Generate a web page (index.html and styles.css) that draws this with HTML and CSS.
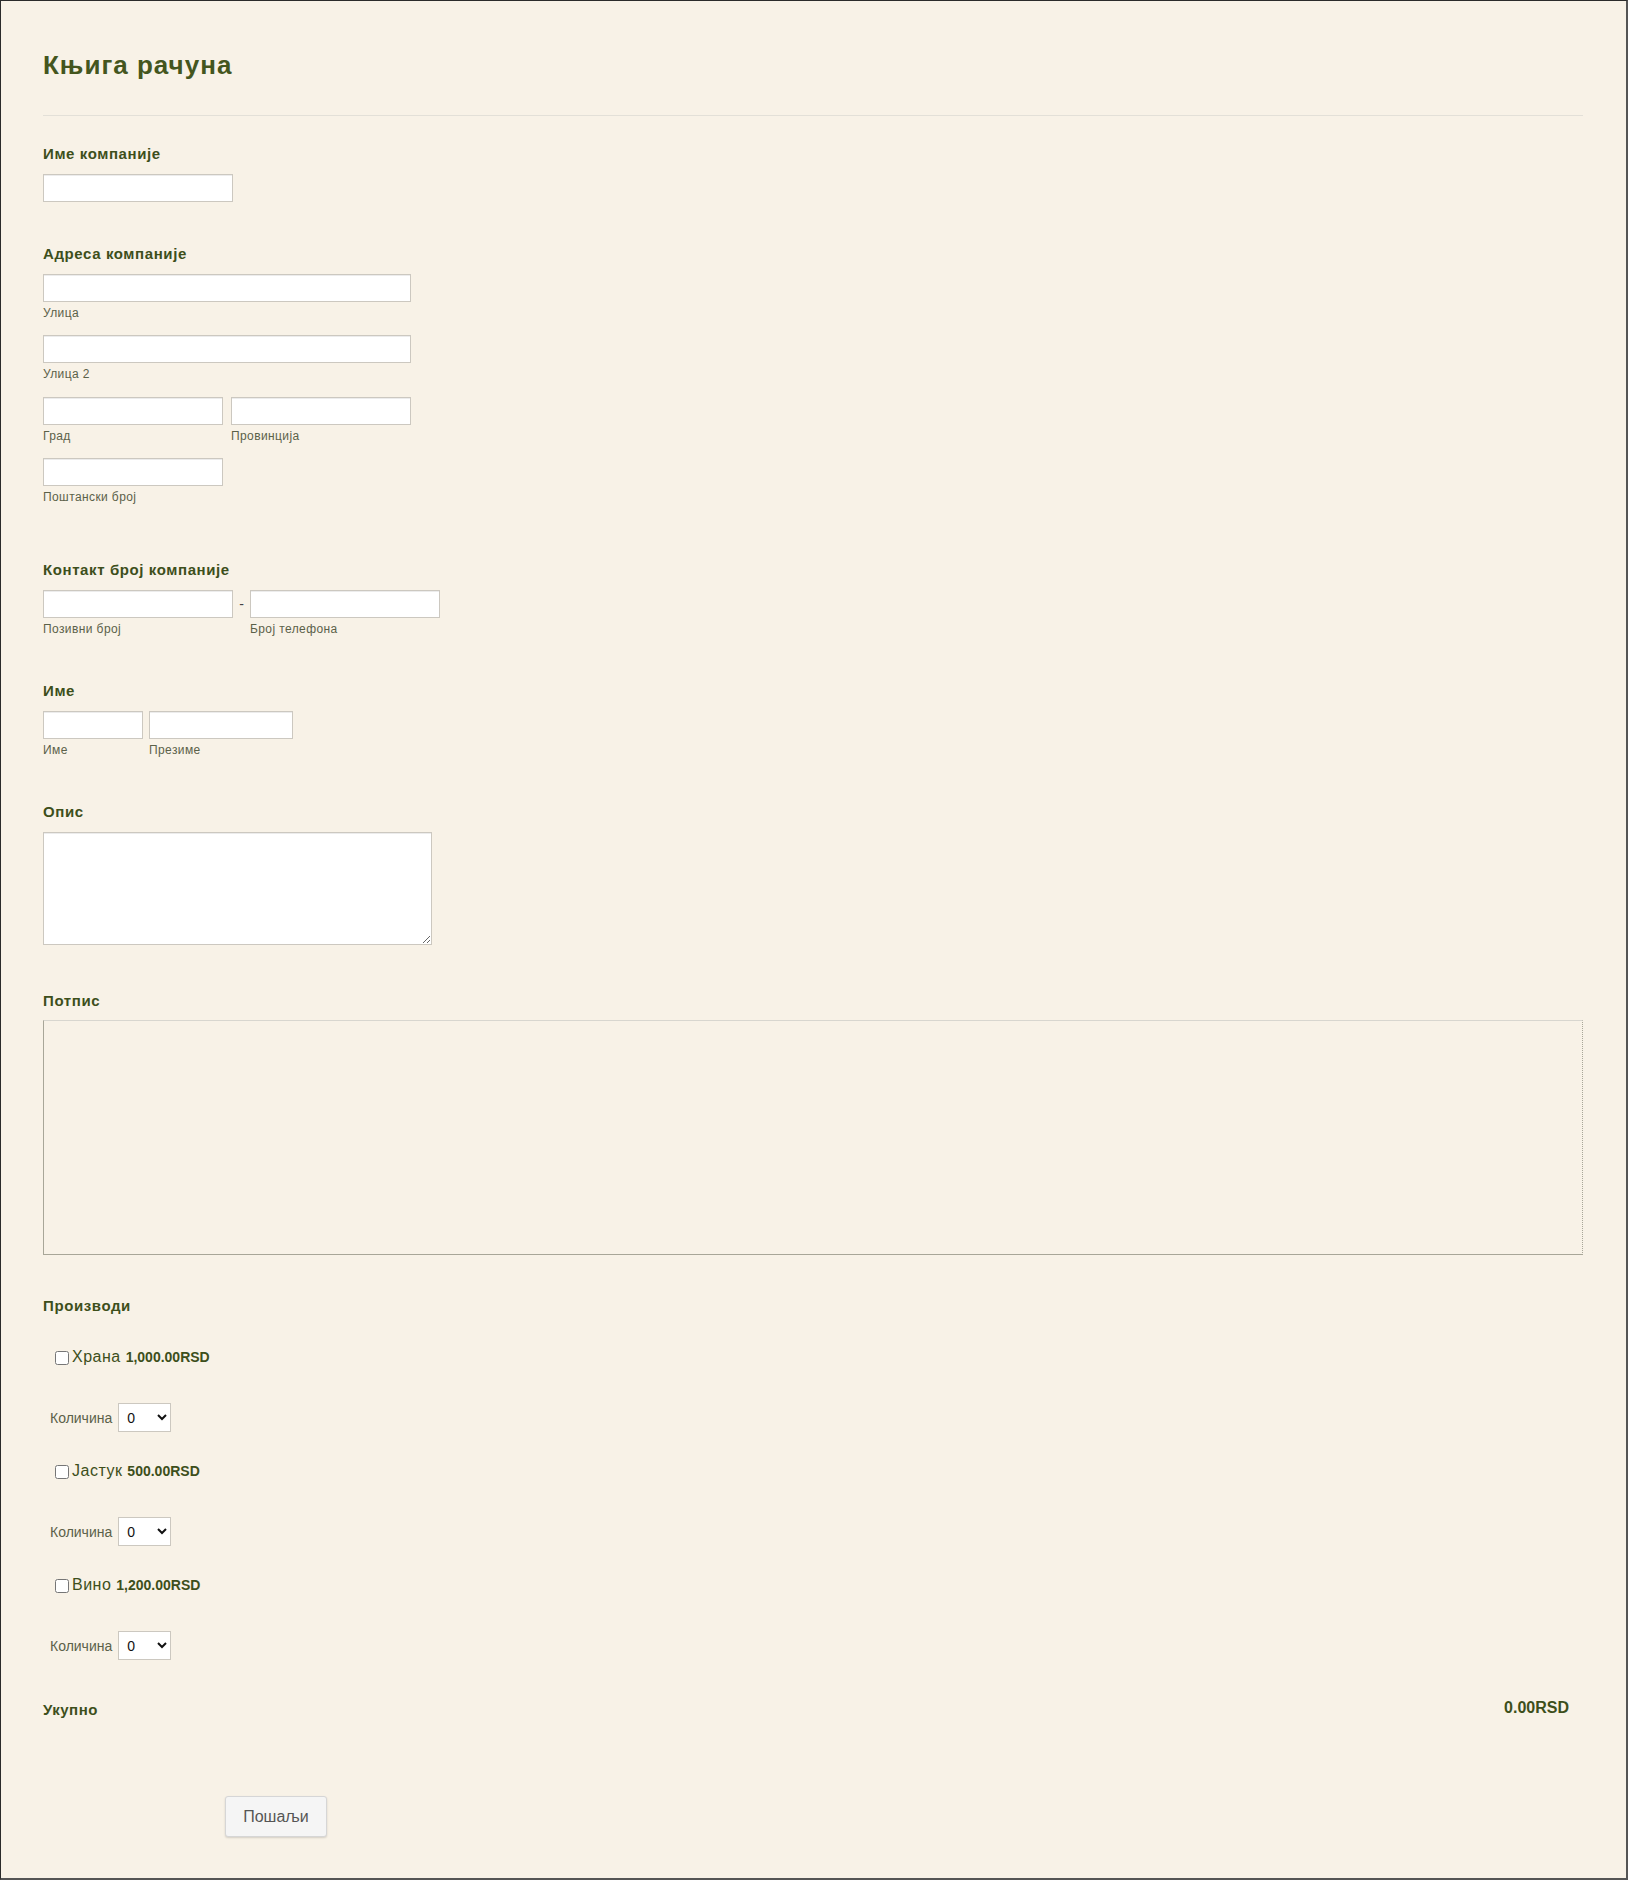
FILE: index.html
```html
<!DOCTYPE html>
<html lang="sr">
<head>
    <meta charset="UTF-8">
    <meta name="viewport" content="width=device-width, initial-scale=1.0">
    <title>Књига рачуна</title>
    <link rel="stylesheet" href="styles.css">
</head>
<body>
    <form id="form-page">
        <div class="form-header">
            <h1 id="form-title">Књига рачуна</h1>
        </div>

        <div class="field field-company">
            <label class="field-label">Име компаније</label>
            <input type="text" class="input-medium">
        </div>

        <div class="field field-address">
            <label class="field-label">Адреса компаније</label>
            <div class="sub-row">
                <div class="sub-field">
                    <input type="text" class="input-wide">
                    <span class="sub-label">Улица</span>
                </div>
            </div>
            <div class="sub-row">
                <div class="sub-field">
                    <input type="text" class="input-wide">
                    <span class="sub-label">Улица 2</span>
                </div>
            </div>
            <div class="sub-row">
                <div class="sub-field">
                    <input type="text" class="input-half">
                    <span class="sub-label">Град</span>
                </div>
                <div class="sub-field">
                    <input type="text" class="input-half">
                    <span class="sub-label">Провинција</span>
                </div>
            </div>
            <div class="sub-row last">
                <div class="sub-field">
                    <input type="text" class="input-half">
                    <span class="sub-label">Поштански број</span>
                </div>
            </div>
        </div>

        <div class="field">
            <label class="field-label">Контакт број компаније</label>
            <div class="sub-row phone-row">
                <div class="sub-field">
                    <input type="text" class="input-medium">
                    <span class="sub-label">Позивни број</span>
                </div>
                <span class="phone-dash">-</span>
                <div class="sub-field">
                    <input type="text" class="input-medium">
                    <span class="sub-label">Број телефона</span>
                </div>
            </div>
        </div>

        <div class="field">
            <label class="field-label">Име</label>
            <div class="sub-row name-row">
                <div class="sub-field">
                    <input type="text" class="input-first">
                    <span class="sub-label">Име</span>
                </div>
                <div class="sub-field">
                    <input type="text" class="input-last">
                    <span class="sub-label">Презиме</span>
                </div>
            </div>
        </div>

        <div class="field">
            <label class="field-label">Опис</label>
            <textarea class="description"></textarea>
        </div>

        <div class="field field-signature">
            <label class="field-label">Потпис</label>
            <div class="signature-pad"></div>
        </div>

        <div class="field field-products">
            <label class="field-label">Производи</label>

            <div class="product">
                <div class="product-row">
                    <input type="checkbox" id="p1">
                    <label for="p1" class="product-name">Храна <span class="product-price">1,000.00RSD</span></label>
                </div>
                <div class="qty-row">
                    <span class="qty-label">Количина</span>
                    <select><option>0</option><option>1</option><option>2</option><option>3</option></select>
                </div>
            </div>

            <div class="product">
                <div class="product-row">
                    <input type="checkbox" id="p2">
                    <label for="p2" class="product-name">Јастук <span class="product-price">500.00RSD</span></label>
                </div>
                <div class="qty-row">
                    <span class="qty-label">Количина</span>
                    <select><option>0</option><option>1</option><option>2</option><option>3</option></select>
                </div>
            </div>

            <div class="product">
                <div class="product-row">
                    <input type="checkbox" id="p3">
                    <label for="p3" class="product-name">Вино <span class="product-price">1,200.00RSD</span></label>
                </div>
                <div class="qty-row">
                    <span class="qty-label">Количина</span>
                    <select><option>0</option><option>1</option><option>2</option><option>3</option></select>
                </div>
            </div>

            <div class="total-row">
                <span class="total-label">Укупно</span>
                <span class="total-value">0.00RSD</span>
            </div>
        </div>

        <div class="form-buttons">
            <button type="submit" class="submit-button">Пошаљи</button>
        </div>
    </form>
</body>
</html>
```

FILE: styles.css
```css
html, body {
    margin: 0;
    padding: 0;
}

body {
    font-family: "Liberation Sans", Arial, sans-serif;
    background-color: #f8f2e7;
    color: #3d4f1b;
}

#form-page {
    box-sizing: border-box;
    width: 1628px;
    min-height: 1880px;
    margin: 0;
    padding: 0 43px 0 42px;
    border: 1px solid #2b2b2b;
    border-right: 2px solid #555;
    border-bottom: 2px solid #555;
    background-color: #f8f2e7;
}

.form-header {
    padding-top: 50px;
    padding-bottom: 36px;
    border-bottom: 1px solid #e3e0d8;
}

#form-title {
    margin: 0;
    font-size: 26px;
    line-height: 28px;
    letter-spacing: 1px;
    font-weight: bold;
    color: #44561e;
}

.field {
    display: flex;
    flex-direction: column;
    align-items: flex-start;
    margin-top: 44px;
}

.field-company {
    margin-top: 28px;
}

.field-address {
    margin-top: 42px;
}

.field-label {
    display: block;
    font-size: 15px;
    line-height: 20px;
    letter-spacing: 0.6px;
    font-weight: bold;
    color: #3d4f1b;
    margin-bottom: 9.75px;
}

input[type="text"],
textarea {
    box-sizing: border-box;
    height: 28px;
    margin: 0;
    padding: 2px 4px;
    border: 1px solid #ccc8c0;
    box-shadow: inset 0 1px 0 #ececec;
    background-color: #fff;
    font-family: inherit;
    font-size: 14px;
}

.input-medium {
    width: 190px;
}

.input-wide {
    width: 368px;
}

.input-half {
    width: 180px;
}

.input-first {
    width: 100px;
}

.input-last {
    width: 144px;
}

.sub-row {
    display: flex;
    gap: 8px;
    margin-bottom: 14.5px;
}

.sub-row.last {
    margin-bottom: 11.25px;
}

.phone-row,
.name-row {
    margin-bottom: 0;
}

.name-row {
    gap: 6px;
}

.phone-row {
    gap: 0;
}

.sub-field {
    display: flex;
    flex-direction: column;
}

.sub-label {
    margin-top: 3px;
    font-size: 12px;
    line-height: 16px;
    letter-spacing: 0.4px;
    color: #5b6149;
}

.phone-dash {
    width: 17px;
    text-align: center;
    font-size: 14px;
    line-height: 28px;
    color: #444;
}

.description {
    width: 389px;
    height: 113px;
    resize: vertical;
}

.field-signature {
    align-items: stretch;
    margin-top: 46px;
}

.signature-pad {
    height: 235px;
    box-sizing: border-box;
    border: 1px solid #a8a698;
    border-top-color: #d8d6cf;
    border-right: 1px dotted #a8a698;
    background-color: #f8f2e7;
}

.field-products {
    align-items: stretch;
    margin-top: 41px;
}

.field-products > .field-label {
    margin-bottom: 31px;
}

.product {
    margin-bottom: 29px;
}

.product-row {
    display: flex;
    align-items: center;
    height: 20px;
    padding-left: 12px;
    margin-bottom: 36px;
}

.product-row input[type="checkbox"] {
    width: 14px;
    height: 14px;
    margin: 2px 3px 0 0;
}

.product-name {
    font-size: 16px;
    letter-spacing: 0.5px;
    color: #3d4f1b;
}

.product-price {
    font-size: 14px;
    letter-spacing: 0;
    font-weight: bold;
}

.qty-row {
    display: flex;
    align-items: center;
    gap: 6px;
    padding-left: 7px;
}

.qty-label {
    font-size: 14px;
    color: #5b6149;
}

select {
    width: 53px;
    height: 29px;
    padding: 0 2px 0 4px;
    border: 1px solid #ccc8c0;
    border-radius: 0;
    background-color: #fff;
    font-family: inherit;
    font-size: 14px;
    color: #111;
}

.total-row {
    display: flex;
    justify-content: space-between;
    align-items: baseline;
    margin-top: 11px;
    padding-right: 14px;
}

.total-label {
    font-size: 15px;
    font-weight: bold;
    line-height: 20px;
    letter-spacing: 0.5px;
}

.total-value {
    font-size: 16px;
    font-weight: bold;
    position: relative;
    top: -2px;
}

.form-buttons {
    padding: 76px 0 0 182px;
}

.submit-button {
    box-sizing: border-box;
    width: 102px;
    height: 41px;
    border: 1px solid #d6d6d6;
    border-radius: 3px;
    background-color: #f5f5f5;
    box-shadow: 0 1px 2px rgba(0, 0, 0, 0.15);
    font-family: inherit;
    font-size: 16px;
    color: #555;
    cursor: pointer;
}
```
